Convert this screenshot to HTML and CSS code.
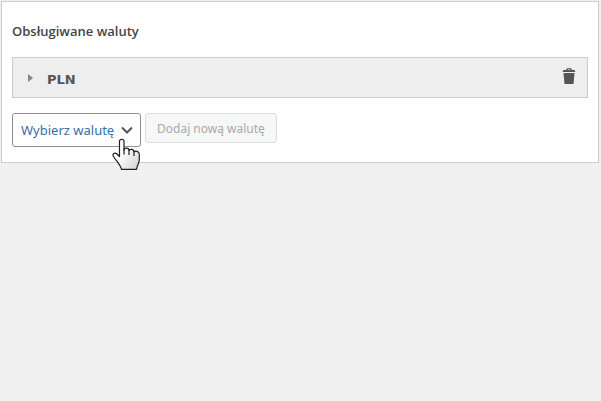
FILE: index.html
```html
<!DOCTYPE html>
<html lang="pl">
<head>
    <meta charset="UTF-8">
    <title>Waluty</title>
    <link rel="stylesheet" href="styles.css">
</head>
<body>
<div class="panel">
    <h2 class="panel-title">Obsługiwane waluty</h2>

    <div class="currency">
        <button type="button" class="currency-toggle">
            <svg class="arrow" width="5" height="8" viewBox="0 0 5 8"><path d="M0 0L5 4L0 8Z" fill="#82878c"/></svg>
            <span>PLN</span>
        </button>
        <button type="button" class="currency-delete" aria-label="Usuń">
            <svg width="14" height="16" viewBox="0 0 14 16">
                <path d="M4.5 2.5C4.5 0 9.5 0 9.5 2.5" fill="none" stroke="#555" stroke-width="1.2"/>
                <path d="M1.5 2H12.5L13.5 4H0.5Z" fill="#555"/>
                <path d="M1.5 5H12.5L11.5 16H2.5Z" fill="#555"/>
            </svg>
        </button>
    </div>

    <form class="add-form">
        <div class="select-wrap">
            <select class="currency-select" aria-label="Wybierz walutę">
                <option>Wybierz walutę</option>
            </select>
            <!-- hand pointer over the drop-down -->
            <svg class="pointer" width="30" height="34" viewBox="0 0 30 34">
                <defs>
                    <linearGradient id="hand" x1="0" y1="0" x2="1" y2="1">
                        <stop offset="0.4" stop-color="#fff"/>
                        <stop offset="1" stop-color="#d0d0d0"/>
                    </linearGradient>
                </defs>
                <path d="M7.5 18.5V3.5C7.5 0.5 12 0.5 12 3.5V12C12.5 9.5 17 9.5 17 12.5C17.5 10.8 22 10.8 22 14C23 12.5 27.3 13 27.3 16V22C27.3 25 25.5 26 24.5 31.3H9.5C8.5 27 4.5 23 1.8 19C-0.5 15.5 3 14 5 16Z" fill="url(#hand)" stroke="#1b1f24" stroke-width="1.2" stroke-linejoin="round"/>
                <path d="M12 11V16.5M17 12V17M22 13.5V18" fill="none" stroke="#1b1f24" stroke-width="1.2"/>
            </svg>
        </div>
        <button type="submit" class="add-button" disabled>Dodaj nową walutę</button>
    </form>
</div>
</body>
</html>
```

FILE: styles.css
```css
* {
    box-sizing: border-box;
}
body {
    min-height: 100vh;
    margin: 0;
    padding: 1px 2px 1px 1px;
    background: #f0f0f0;
    color: #444;
    font-family: "Noto Sans", "Open Sans", sans-serif;
    font-size: 13px;
}
.panel {
    padding: 20px 10px 15px;
    background: #fff;
    border: 1px solid #ccc;
}
.panel-title {
    margin: 0 0 16px;
    font-family: "Open Sans", "Noto Sans", sans-serif;
    font-size: 13px;
    font-weight: 600;
    line-height: 19px;
}
.currency {
    display: flex;
    align-items: center;
    height: 41px;
    background: #eee;
    border: 1px solid #ccc;
}
.currency-toggle {
    display: flex;
    flex: 1;
    align-items: center;
    gap: 14px;
    padding: 5px 0 0 15px;
    border: none;
    background: none;
    color: #555;
    font-family: "DejaVu Sans", Verdana, sans-serif;
    font-size: 13px;
    font-weight: 700;
    line-height: 20px;
    cursor: pointer;
}
.arrow {
    margin-bottom: 4px;
}
.currency-delete {
    display: flex;
    padding: 0 11px 4px;
    border: none;
    background: none;
    cursor: pointer;
}
.add-form {
    display: flex;
    align-items: flex-start;
    gap: 4px;
    margin-top: 15px;
}
.select-wrap {
    position: relative;
}
.currency-select {
    display: block;
    height: 34px;
    padding: 0 25px 0 8px;
    border: 1px solid #8c8f94;
    border-radius: 3px;
    appearance: none;
    background: #fff url("data:image/svg+xml,%3Csvg xmlns='http://www.w3.org/2000/svg' width='12' height='8'%3E%3Cpath d='M1 1.5L6 6.5L11 1.5' fill='none' stroke='%23555' stroke-width='2'/%3E%3C/svg%3E") no-repeat right 7px center;
    color: #3a6ea8;
    font-family: inherit;
    font-size: 13px;
    cursor: pointer;
}
.pointer {
    position: absolute;
    top: 25px;
    left: 100px;
    pointer-events: none;
}
.add-button {
    height: 30px;
    padding: 0 11px;
    border: 1px solid #dcdcde;
    border-radius: 3px;
    background: #f6f7f7;
    color: #a7aaad;
    font-family: inherit;
    font-size: 12px;
}
```
